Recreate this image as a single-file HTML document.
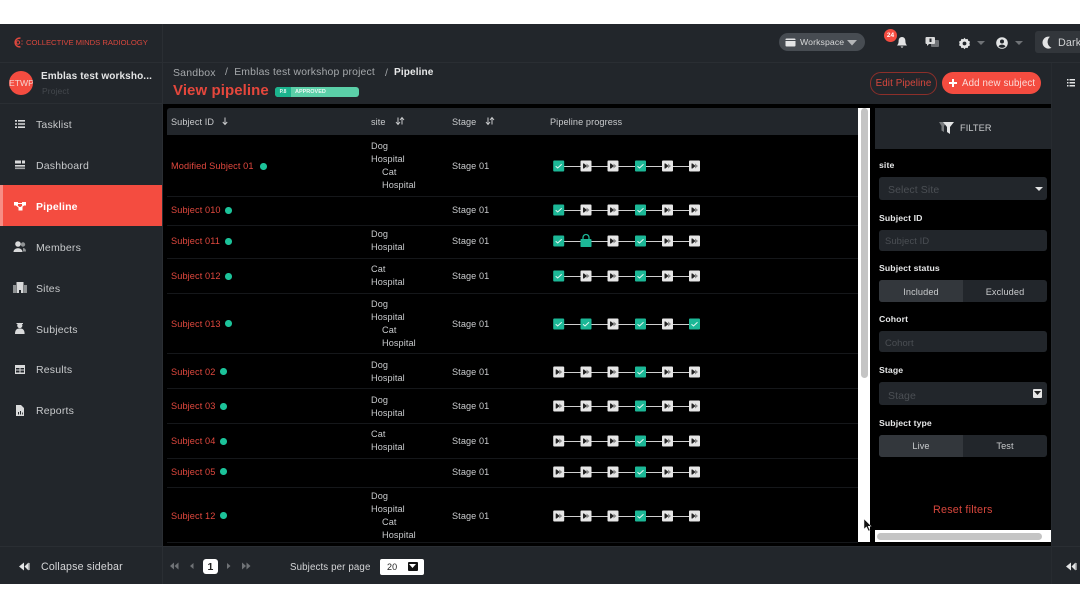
<!DOCTYPE html>
<html><head><meta charset="utf-8">
<style>
html,body{margin:0;padding:0;background:#fff}
#p{position:relative;width:1080px;height:608px;overflow:hidden;background:#fff;font-family:"Liberation Sans",sans-serif;font-size:9.2px;color:#c9cbcd;letter-spacing:.1px;filter:blur(.3px)}
#p div,#p span.a{position:absolute;white-space:nowrap}
.bg{background:#22262b}
.nav{left:36px;font-size:10.5px;color:#c8cacc;line-height:14px;letter-spacing:.18px;margin-top:1px}
.sid{left:171px;color:#e0483e;line-height:12px;font-size:9.2px;margin-top:1px}
.dot{width:6.5px;height:6.5px;border-radius:50%;background:#1cc39a}
.t{color:#c9cbcd;line-height:13px;font-size:9.15px;margin-top:1px}
.ln{left:167px;width:691px;height:1px;background:#15171a}
.lb{left:879px;color:#e6e7e8;font-weight:bold;font-size:8.7px;line-height:12px}
.in{left:879px;width:168px;background:#22262b;border-radius:3px}
.ph{color:#4b4f54;font-size:10.5px;line-height:14px;margin-top:1px}
.seg{text-align:center;font-size:9.2px;color:#c9cbcd}
</style></head><body>
<div id="p">
<div class="bg" style="left:0;top:24px;width:1080px;height:560px"></div>
<div style="left:0;top:62px;width:1080px;height:1px;background:#2a2e33"></div>
<div style="left:0;top:103px;width:163px;height:1px;background:#2a2e33"></div>
<div style="left:162px;top:24px;width:1px;height:522px;background:#2a2e33"></div>
<!-- logo -->
<svg style="position:absolute;left:12px;top:36px" width="12" height="13" viewBox="0 0 12 13"><path d="M8.5 2.2A4.4 4.4 0 1 0 8.5 10.8" fill="none" stroke="#e0483e" stroke-width="1.5"/><circle cx="6" cy="6.5" r="1.7" fill="none" stroke="#e0483e"/><circle cx="10" cy="5" r=".6" fill="#e0483e"/><circle cx="10" cy="8" r=".6" fill="#e0483e"/></svg>
<div style="left:26px;top:36px;font-size:7.7px;line-height:13px;color:#d8473d;letter-spacing:-.03px">COLLECTIVE MINDS RADIOLOGY</div>
<!-- project -->
<div style="left:9px;top:71px;width:24px;height:24px;border-radius:50%;background:#f44c40;color:#f6d6d2;font-size:8.6px;line-height:24px;text-align:center;overflow:hidden;letter-spacing:0">ETWP</div>
<div style="left:41px;top:70px;font-size:10px;line-height:14px;color:#e4e5e6;font-weight:bold;letter-spacing:.12px">Emblas test worksho...</div>
<div style="left:42px;top:85px;font-size:8.5px;line-height:12px;color:#44484d">Project</div>
<!-- nav -->
<div style="left:0;top:185px;width:162px;height:41px;background:#f44c40"></div>
<div style="left:0;top:185px;width:3px;height:41px;background:#f78d85"></div>
<div class="nav" style="top:117px">Tasklist</div>
<div class="nav" style="top:158px">Dashboard</div>
<div class="nav" style="top:199px;color:#fff;font-weight:bold">Pipeline</div>
<div class="nav" style="top:240px">Members</div>
<div class="nav" style="top:281px">Sites</div>
<div class="nav" style="top:322px">Subjects</div>
<div class="nav" style="top:362px">Results</div>
<div class="nav" style="top:403px">Reports</div>
<svg style="position:absolute;left:0;top:0" width="36" height="430" viewBox="0 0 36 430" fill="#d9dadb">
<path d="M15 120h2v1.6h-2zM18 120h7v1.6h-7zM15 123.2h2v1.6h-2zM18 123.2h7v1.6h-7zM15 126.4h2v1.6h-2zM18 126.4h7v1.6h-7z"/>
<path d="M15 160.5h6v3h-6zM22 160.5h3v3h-3zM15 165h10v1.6h-10z"/><path d="M15 167.5h10v1.6h-10z" opacity=".7"/>
<g fill="#fff"><rect x="14" y="202" width="4" height="3.5"/><rect x="22" y="202" width="4" height="3.5"/><rect x="18.5" y="207" width="4" height="3.5"/><path d="M16 205l4 3 4-3" fill="none" stroke="#fff"/><path d="M18 203h4v1h-4z"/></g>
<circle cx="18" cy="244" r="2.8"/><path d="M13.5 252c0-5 9-5 9 0z"/><circle cx="23" cy="244.5" r="2.2" opacity=".6"/><path d="M23 248c2 0 3 1.500 3 3.500h-3z" opacity=".6"/>
<path d="M16.500 282h7v11h-2.500v-3h-2v3h-2.500z"/><path d="M13 285h3v8h-3zM24 285h3v8h-3z" opacity=".6"/>
<circle cx="19.800" cy="325.500" r="2.600"/><path d="M16.500 323h6.500v1h-6.500z"/><path d="M15 334c0-5 2.500-5.500 4.800-5.500s4.800.5 4.800 5.500z"/>
<path fill-rule="evenodd" d="M15 365h10v9h-10zM16 368h3.500v1.500h-3.500zM20.500 368h3.500v1.500h-3.500zM16 370.500h3.500v2h-3.500zM20.500 370.500h3.500v2h-3.500z"/>
<path fill-rule="evenodd" d="M16 405h5l3 3v8h-8zM18 412v2.500h1V412zM20 411v3.500h1V411zM22 412.500v2h.8v-2z"/>
</svg>
<!-- top bar right -->
<div style="left:779px;top:33px;width:86px;height:18px;border-radius:9px;background:#474c52"></div>
<svg style="position:absolute;left:785px;top:38px" width="11" height="9"><rect width="10" height="8" x=".5" y=".5" rx="1" fill="#e3e4e5"/><rect x=".5" y="2" width="10" height="1" fill="#474c52"/></svg>
<div style="left:800px;top:36px;font-size:8.7px;line-height:12px;color:#d7d8d9">Workspace</div>
<svg style="position:absolute;left:847px;top:40px" width="10" height="6"><path d="M0 0h10L5 5.500z" fill="#b4b6b8"/></svg>
<div style="left:884px;top:29px;width:13px;height:13px;border-radius:50%;background:#f44c40;color:#fff;font-size:6.500px;font-weight:bold;line-height:13px;text-align:center;letter-spacing:0">24</div>
<svg style="position:absolute;left:896px;top:36px" width="12" height="13" viewBox="0 0 12 13" fill="#e3e4e5"><path d="M6 1c2.400 0 3.400 2 3.400 4 0 2.500.8 3.500 1.600 4.500H1C1.800 8.500 2.600 7.500 2.600 5 2.600 3 3.600 1 6 1z"/><path d="M4.500 10.500h3L6 12z"/></svg>
<svg style="position:absolute;left:925px;top:36px" width="15" height="13" viewBox="0 0 15 13"><rect x="6" y="4" width="8" height="7" rx="1" fill="#6f7276"/><path d="M1.500 1h7.500a1 1 0 0 1 1 1v5a1 1 0 0 1-1 1H4l-2 2V8h-.5a1 1 0 0 1-1-1V2a1 1 0 0 1 1-1z" fill="#d9dadb"/><rect x="4.500" y="2.500" width="2" height="3.500" fill="#22262b"/></svg>
<svg style="position:absolute;left:958px;top:37px" width="13" height="13" viewBox="0 0 13 13"><path d="M6.500.8l1.200 1.500 1.900-.4.600 1.900 1.800.8-.6 1.900.6 1.900-1.800.8-.6 1.900-1.900-.4-1.200 1.500-1.200-1.500-1.900.4-.6-1.900-1.800-.8.600-1.900-.6-1.900 1.800-.8.600-1.900 1.900.4z" fill="#e3e4e5"/><circle cx="6.500" cy="6.500" r="1.900" fill="#22262b"/></svg>
<svg style="position:absolute;left:977px;top:41px" width="8" height="5"><path d="M0 0h8L4 4z" fill="#6f7276"/></svg>
<svg style="position:absolute;left:996px;top:37px" width="12" height="12" viewBox="0 0 12 12"><circle cx="6" cy="6" r="5.800" fill="#e3e4e5"/><circle cx="6" cy="4.500" r="2" fill="#22262b"/><path d="M2.500 9.500c1-2.500 6-2.500 7 0a5 5 0 0 1-7 0z" fill="#22262b"/></svg>
<svg style="position:absolute;left:1015px;top:41px" width="8" height="5"><path d="M0 0h8L4 4z" fill="#6f7276"/></svg>
<div style="left:1035px;top:31px;width:50px;height:22px;border-radius:3px;background:#32363b"></div>
<svg style="position:absolute;left:1042px;top:36px" width="11" height="13" viewBox="0 0 11 13"><path d="M8 .8A6 6 0 1 0 9.500 11.800 6.500 6.500 0 0 1 8 .8z" fill="#e3e4e5"/></svg>
<div style="left:1058px;top:36px;font-size:10.800px;line-height:14px;color:#d0d1d3">Dark</div>
<!-- breadcrumbs -->
<div style="left:173px;top:66px;font-size:10.500px;line-height:14px;color:#a5a8ab;letter-spacing:.18px">Sandbox</div>
<div style="left:225px;top:66px;font-size:10.400px;line-height:14px;color:#a5a8ab;letter-spacing:.18px">/&nbsp; Emblas test workshop project</div>
<div style="left:385px;top:66px;font-size:10.500px;line-height:14px;color:#a5a8ab">/</div>
<div style="left:394px;top:66px;font-size:10.100px;line-height:14px;color:#e8e9ea;font-weight:bold">Pipeline</div>
<div style="left:173px;top:81px;font-size:15px;line-height:19px;color:#e5473c;font-weight:bold;letter-spacing:.08px">View pipeline</div>
<div style="left:275px;top:87px;width:84px;height:10px;border-radius:3px;background:#5bcfa8;overflow:hidden"></div>
<div style="left:275px;top:87px;width:16px;height:10px;border-radius:3px 0 0 3px;background:#1cb48e;color:#e4f6f1;font-size:5px;font-weight:bold;line-height:10px;text-align:center;letter-spacing:0">P.8</div>
<div style="left:295px;top:87px;color:#e9f8f3;font-size:5.500px;font-weight:bold;line-height:10px;letter-spacing:0">APPROVED</div>
<!-- buttons -->
<div style="left:870px;top:72px;width:65px;height:21px;border-radius:11px;border:1px solid #8c2f2a;color:#d8473d;font-size:9.800px;line-height:22px;text-align:center;letter-spacing:.1px">Edit Pipeline</div>
<div style="left:942px;top:72px;width:99px;height:22px;border-radius:11px;background:#f44c40;color:#fbdcd9;font-size:9.700px;line-height:23px;letter-spacing:.14px"><span style="position:absolute;left:20px;top:0">Add new subject</span></div>
<svg style="position:absolute;left:948px;top:78px" width="10" height="10"><path d="M4 1h2v3h3v2H6v3H4V6H1V4h3z" fill="#fff"/></svg>
<!-- right rail -->
<div style="left:1051px;top:63px;width:1px;height:521px;background:#272b30"></div>
<svg style="position:absolute;left:1066px;top:78px" width="10" height="10" fill="#e3e4e5"><path d="M1 1h1.500v1.500H1zM3.500 1H9v1.500H3.500zM1 4h1.500v1.500H1zM3.500 4H9v1.500H3.500zM1 7h1.500v1.500H1zM3.500 7H9v1.500H3.500z"/></svg>
<!-- main black -->
<div style="left:163px;top:104px;width:888px;height:442px;background:#000"></div>
<div style="left:167px;top:108px;width:691px;height:27px;background:#22262b;border-radius:3px 0 0 0"></div>
<div class="t" style="left:171px;top:115px">Subject ID</div>
<div class="t" style="left:371px;top:115px">site</div>
<div class="t" style="left:452px;top:115px">Stage</div>
<div class="t" style="left:550px;top:115px">Pipeline progress</div>
<svg style="position:absolute;left:0;top:0" width="520" height="130" stroke="#c9cbcd" fill="none"><path d="M225 117.500v7M222.800 122l2.200 2.500 2.200-2.500M398 117.500v7M396 122l2 2.500 2-2.500M402 124.500v-7M400 120l2-2.500 2 2.500M488 117.500v7M486 122l2 2.500 2-2.500M492 124.500v-7M490 120l2-2.500 2 2.500"/></svg>
<!-- row lines -->
<div class="ln" style="top:196px"></div><div class="ln" style="top:225px"></div><div class="ln" style="top:258px"></div><div class="ln" style="top:293px"></div><div class="ln" style="top:353px"></div><div class="ln" style="top:388px"></div><div class="ln" style="top:423px"></div><div class="ln" style="top:458px"></div><div class="ln" style="top:487px"></div><div class="ln" style="top:542px"></div>
<!-- ids -->
<div class="sid" style="top:159px">Modified Subject 01</div><div class="dot" style="left:260px;top:163px"></div>
<div class="sid" style="top:203px">Subject 010</div><div class="dot" style="left:225px;top:207px"></div>
<div class="sid" style="top:234px">Subject 011</div><div class="dot" style="left:225px;top:238px"></div>
<div class="sid" style="top:269px">Subject 012</div><div class="dot" style="left:225px;top:273px"></div>
<div class="sid" style="top:317px">Subject 013</div><div class="dot" style="left:225px;top:320px"></div>
<div class="sid" style="top:365px">Subject 02</div><div class="dot" style="left:220px;top:368px"></div>
<div class="sid" style="top:399px">Subject 03</div><div class="dot" style="left:220px;top:403px"></div>
<div class="sid" style="top:434px">Subject 04</div><div class="dot" style="left:220px;top:438px"></div>
<div class="sid" style="top:465px">Subject 05</div><div class="dot" style="left:220px;top:468px"></div>
<div class="sid" style="top:509px">Subject 12</div><div class="dot" style="left:220px;top:512px"></div>
<!-- sites -->
<div class="t" style="left:371px;top:139px">Dog</div><div class="t" style="left:371px;top:152px">Hospital</div><div class="t" style="left:382px;top:165px">Cat</div><div class="t" style="left:382px;top:178px">Hospital</div>
<div class="t" style="left:371px;top:227px">Dog</div><div class="t" style="left:371px;top:240px">Hospital</div>
<div class="t" style="left:371px;top:262px">Cat</div><div class="t" style="left:371px;top:275px">Hospital</div>
<div class="t" style="left:371px;top:297px">Dog</div><div class="t" style="left:371px;top:310px">Hospital</div><div class="t" style="left:382px;top:323px">Cat</div><div class="t" style="left:382px;top:336px">Hospital</div>
<div class="t" style="left:371px;top:358px">Dog</div><div class="t" style="left:371px;top:371px">Hospital</div>
<div class="t" style="left:371px;top:393px">Dog</div><div class="t" style="left:371px;top:406px">Hospital</div>
<div class="t" style="left:371px;top:427px">Cat</div><div class="t" style="left:371px;top:440px">Hospital</div>
<div class="t" style="left:371px;top:489px">Dog</div><div class="t" style="left:371px;top:502px">Hospital</div><div class="t" style="left:382px;top:515px">Cat</div><div class="t" style="left:382px;top:528px">Hospital</div>
<!-- stages -->
<div class="t" style="left:452px;top:159px">Stage 01</div><div class="t" style="left:452px;top:203px">Stage 01</div><div class="t" style="left:452px;top:234px">Stage 01</div><div class="t" style="left:452px;top:269px">Stage 01</div><div class="t" style="left:452px;top:317px">Stage 01</div><div class="t" style="left:452px;top:365px">Stage 01</div><div class="t" style="left:452px;top:399px">Stage 01</div><div class="t" style="left:452px;top:434px">Stage 01</div><div class="t" style="left:452px;top:465px">Stage 01</div><div class="t" style="left:452px;top:509px">Stage 01</div>
<!-- pipeline -->
<svg style="position:absolute;left:540px;top:0" width="170" height="540" viewBox="540 0 170 540">
<defs>
<g id="c"><rect x="-5.500" y="-5.500" width="11" height="11" rx="1" fill="#1cb897"/><path d="M-3 0.300L-1 2 3-1.800" fill="none" stroke="#e6f7f2" stroke-width="1"/></g>
<g id="s"><rect x="-5.500" y="-5.500" width="11" height="11" rx="1" fill="#e6e6e6"/><path d="M-3 -2.500h1V2.500h-1zM-2-2.500L1 0-2 2.500z" fill="#222"/><path d="M0.500-2.500L3.500 0 .5 2.500z" fill="#888"/></g>
<g id="l"><rect x="-5.500" y="-2" width="11" height="8" rx=".8" fill="#1cb897"/><path d="M-3-2v-1.500a3 3 0 0 1 6 0V-2" fill="none" stroke="#1cb897" stroke-width="1.300"/></g>
<g id="a"><path d="M559 .5H695" stroke="#cfcfcf"/><use href="#c" x="558.700"/><use href="#s" x="586"/><use href="#s" x="613"/><use href="#c" x="640.500"/><use href="#s" x="667.500"/><use href="#s" x="694.500"/></g>
<g id="b"><path d="M559 .5H695" stroke="#cfcfcf"/><use href="#s" x="558.700"/><use href="#s" x="586"/><use href="#s" x="613"/><use href="#c" x="640.500"/><use href="#s" x="667.500"/><use href="#s" x="694.500"/></g>
</defs>
<use href="#a" y="166"/><use href="#a" y="210"/>
<g transform="translate(0,241)"><path d="M559 .5H695" stroke="#cfcfcf"/><use href="#c" x="558.700"/><use href="#l" x="586"/><use href="#s" x="613"/><use href="#c" x="640.500"/><use href="#s" x="667.500"/><use href="#s" x="694.500"/></g>
<use href="#a" y="276"/>
<g transform="translate(0,324)"><path d="M559 .5H695" stroke="#cfcfcf"/><use href="#c" x="558.700"/><use href="#c" x="586"/><use href="#s" x="613"/><use href="#c" x="640.500"/><use href="#s" x="667.500"/><use href="#c" x="694.500"/></g>
<use href="#b" y="372"/><use href="#b" y="406"/><use href="#b" y="441"/><use href="#b" y="472"/><use href="#b" y="516"/>
</svg>
<!-- v scrollbar -->
<div style="left:858px;top:108px;width:12px;height:434px;background:#fff"></div>
<div style="left:861px;top:108px;width:7px;height:270px;border-radius:4px;background:#c4c4c4"></div>
<svg style="position:absolute;left:863px;top:518px" width="10" height="14" viewBox="0 0 10 14"><path d="M1 1v10l2.500-2.200L5.500 13l1.500-.7-2-4 3.200-.2z" fill="#111" stroke="#eee" stroke-width=".5"/></svg>
<!-- filter -->
<div style="left:875px;top:108px;width:176px;height:41px;background:#22262b"></div>
<svg style="position:absolute;left:938px;top:121px" width="18" height="14" viewBox="0 0 18 14"><path d="M1 1h8l-3 4v6L3.500 9.500V5z" fill="#777a7d"/><path d="M5 1h11l-4 5v7l-3-2V6z" fill="#e3e4e5"/></svg>
<div style="left:960px;top:122px;font-size:9.200px;line-height:12px;color:#c9cbcd">FILTER</div>
<div class="lb" style="top:159px">site</div>
<div class="in" style="top:177px;height:23px"></div>
<div class="ph" style="left:888px;top:182px">Select Site</div>
<svg style="position:absolute;left:1035px;top:187px" width="9" height="5"><path d="M0 0h8L4 4z" fill="#e3e4e5"/></svg>
<div class="lb" style="top:212px">Subject ID</div>
<div class="in" style="top:230px;height:21px"></div>
<div class="ph" style="left:885px;top:233px;font-size:9.400px">Subject ID</div>
<div class="lb" style="top:262px">Subject status</div>
<div class="in" style="top:280px;height:22px;background:#22262b"></div>
<div class="seg" style="left:879px;top:280px;width:84px;height:22px;line-height:24px;background:#33373c;border-radius:3px 0 0 3px">Included</div>
<div class="seg" style="left:963px;top:280px;width:84px;height:22px;line-height:24px">Excluded</div>
<div class="lb" style="top:313px">Cohort</div>
<div class="in" style="top:331px;height:21px"></div>
<div class="ph" style="left:885px;top:335px;font-size:9.400px">Cohort</div>
<div class="lb" style="top:364px">Stage</div>
<div class="in" style="top:382px;height:23px"></div>
<div class="ph" style="left:888px;top:388px">Stage</div>
<div style="left:1033px;top:389px;width:9px;height:9px;border-radius:1px;background:#e6e6e6"></div>
<svg style="position:absolute;left:1034px;top:391px" width="7" height="5"><path d="M0 0h7L3.500 4z" fill="#222"/></svg>
<div class="lb" style="top:417px">Subject type</div>
<div class="in" style="top:435px;height:22px"></div>
<div class="seg" style="left:879px;top:435px;width:84px;height:22px;line-height:23px;background:#33373c;border-radius:3px 0 0 3px">Live</div>
<div class="seg" style="left:963px;top:435px;width:84px;height:22px;line-height:23px">Test</div>
<div style="left:933px;top:503px;font-size:10.800px;line-height:14px;color:#d8473d;letter-spacing:.2px">Reset filters</div>
<div style="left:875px;top:530px;width:176px;height:12px;background:#fff"></div>
<div style="left:877px;top:533px;width:165px;height:7px;border-radius:4px;background:#c4c4c4"></div>
<!-- bottom bar -->
<div class="bg" style="left:0;top:546px;width:1080px;height:38px"></div>
<div style="left:0;top:546px;width:1080px;height:1px;background:#2a2e33"></div>
<div style="left:162px;top:546px;width:1px;height:38px;background:#2a2e33"></div>
<div style="left:1051px;top:546px;width:1px;height:38px;background:#272b30"></div>
<svg style="position:absolute;left:19px;top:562px" width="12" height="9"><path d="M0 4.500L5 .5v8zM5.500 4.500l4-4v8z" fill="#e3e4e5"/><rect x="9.500" y="1" width="1.500" height="7" fill="#8a8c8f"/></svg>
<div style="left:41px;top:560px;font-size:10.600px;line-height:14px;color:#d5d6d8;letter-spacing:.18px">Collapse sidebar</div>
<svg style="position:absolute;left:170px;top:562px" width="90" height="9" fill="#6f7276"><path d="M0 4l4-3.500v7zM4.500 4l4-3.500v7zM20 4l3.500-3v6zM57 1l3.500 3-3.500 3zM72 .5l4 3.500-4 3.500zM76.500 .5l4 3.500-4 3.500z"/></svg>
<div style="left:203px;top:559px;width:15px;height:15px;border-radius:3px;background:#fff;color:#222;font-size:10.500px;font-weight:bold;line-height:16px;text-align:center">1</div>
<div style="left:290px;top:561px;font-size:9.700px;line-height:14px;color:#d5d6d8;letter-spacing:.14px">Subjects per page</div>
<div style="left:380px;top:559px;width:44px;height:16px;border-radius:2px;background:#fff"></div>
<div style="left:387px;top:560px;font-size:9px;line-height:14px;color:#222">20</div>
<div style="left:408px;top:562px;width:10px;height:9px;border-radius:1px;background:#111"></div>
<svg style="position:absolute;left:409px;top:564px" width="8" height="5"><path d="M0 0h7L3.500 4z" fill="#fff"/></svg>
<svg style="position:absolute;left:1066px;top:562px" width="12" height="9"><path d="M0 4.500L5 .5v8zM5.500 4.500l4-4v8z" fill="#e3e4e5"/><rect x="9.500" y="1" width="1.500" height="7" fill="#8a8c8f"/></svg>
</div>
</body></html>
